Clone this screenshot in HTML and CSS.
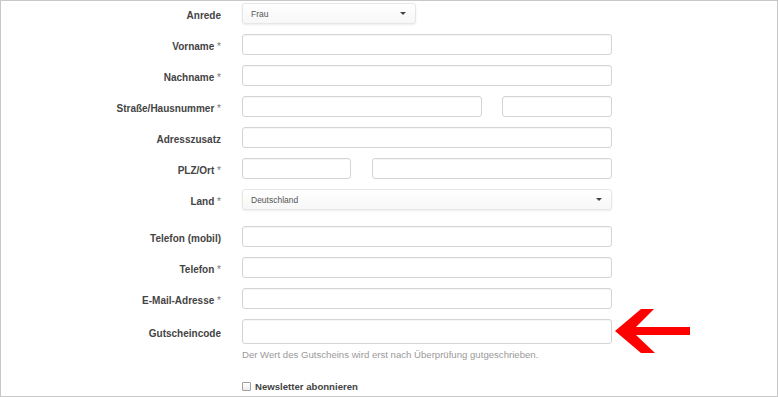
FILE: index.html
```html
<!DOCTYPE html>
<html lang="de">
<head>
<meta charset="utf-8">
<title>Formular</title>
<link rel="stylesheet" href="styles.css">
</head>
<body>
<div class="frame">
  <form class="form">
    <div class="row">
      <label class="label">Anrede</label>
      <div class="select select-short"><span>Frau</span><i class="caret"></i></div>
    </div>
    <div class="row">
      <label class="label">Vorname <span class="req">*</span></label>
      <div class="input input-full"></div>
    </div>
    <div class="row">
      <label class="label">Nachname <span class="req">*</span></label>
      <div class="input input-full"></div>
    </div>
    <div class="row">
      <label class="label">Straße/Hausnummer <span class="req">*</span></label>
      <div class="pair">
        <div class="input input-street"></div>
        <div class="input input-number"></div>
      </div>
    </div>
    <div class="row">
      <label class="label">Adresszusatz</label>
      <div class="input input-full"></div>
    </div>
    <div class="row">
      <label class="label">PLZ/Ort <span class="req">*</span></label>
      <div class="pair">
        <div class="input input-zip"></div>
        <div class="input input-city"></div>
      </div>
    </div>
    <div class="row row-spaced">
      <label class="label">Land <span class="req">*</span></label>
      <div class="select select-full"><span>Deutschland</span><i class="caret"></i></div>
    </div>
    <div class="row">
      <label class="label">Telefon (mobil)</label>
      <div class="input input-full"></div>
    </div>
    <div class="row">
      <label class="label">Telefon <span class="req">*</span></label>
      <div class="input input-full"></div>
    </div>
    <div class="row">
      <label class="label">E-Mail-Adresse <span class="req">*</span></label>
      <div class="input input-full"></div>
    </div>
    <div class="row row-tall">
      <label class="label">Gutscheincode</label>
      <div class="input input-full input-tall"></div>
      <svg class="arrow" width="80" height="50" viewBox="0 0 80 50">
        <polygon points="0,22 26,0 39,0 21,18 75,18 75,26 21,26 40,44 26,44" fill="#ff0000"/>
      </svg>
    </div>
    <p class="help">Der Wert des Gutscheins wird erst nach Überprüfung gutgeschrieben.</p>
    <div class="check-row">
      <span class="checkbox"></span>
      <span class="check-label">Newsletter abonnieren</span>
    </div>
  </form>
</div>
</body>
</html>
```

FILE: styles.css
```css
html, body {
  margin: 0;
  padding: 0;
  background: #ffffff;
}
.frame {
  box-sizing: border-box;
  width: 778px;
  height: 397px;
  border: 1px solid #c8c8c8;
  overflow: hidden;
  font-family: "Liberation Sans", Arial, sans-serif;
  color: #444444;
}
.form {
  padding-top: 2px;
}
.row {
  display: flex;
  align-items: center;
  height: 21px;
  margin-bottom: 10px;
  position: relative;
}
.row-spaced {
  margin-bottom: 16px;
}
.row-tall {
  height: 25px;
  margin-bottom: 0;
}
.label {
  box-sizing: border-box;
  width: 221px;
  padding-top: 3px;
  padding-right: 1px;
  text-align: right;
  font-size: 10px;
  font-weight: bold;
  color: #444444;
  flex: none;
}
.req {
  font-weight: normal;
  font-size: 10px;
  color: #777777;
}
.input, .select {
  box-sizing: border-box;
  height: 21px;
  border: 1px solid #d4d4d4;
  border-radius: 3px;
  background: #ffffff;
  box-shadow: inset 0 1px 1px rgba(0,0,0,0.04);
  margin-left: 20px;
  flex: none;
}
.input-full { width: 370px; }
.input-tall { height: 25px; }
.pair {
  display: flex;
  margin-left: 20px;
}
.pair .input { margin-left: 0; }
.input-street { width: 240px; margin-right: 20px; }
.input-number { width: 110px; }
.input-zip { width: 109px; margin-right: 21px; }
.input-city { width: 240px; }
.select {
  display: flex;
  align-items: center;
  justify-content: space-between;
  padding: 0 9px 0 8px;
  border-color: #e6e6e6;
  background: linear-gradient(#ffffff, #f7f7f7);
  box-shadow: 0 1px 2px rgba(0,0,0,0.08);
  font-size: 8.5px;
  color: #555555;
}
.select-short { width: 174px; }
.select-full { width: 370px; }
.caret {
  width: 0;
  height: 0;
  border-left: 3px solid transparent;
  border-right: 3px solid transparent;
  border-top: 3px solid #444444;
}
.arrow {
  position: absolute;
  left: 614px;
  top: -10px;
}
.help {
  margin: 4px 0 0 241px;
  font-size: 9.6px;
  line-height: 14px;
  color: #9a9a9a;
}
.check-row {
  display: flex;
  align-items: center;
  margin: 19px 0 0 241px;
}
.checkbox {
  box-sizing: border-box;
  width: 9px;
  height: 9px;
  border: 1px solid #a0a0a0;
  border-radius: 1px;
  background: linear-gradient(#ffffff, #ececec);
  margin-right: 4px;
}
.check-label {
  font-size: 9.6px;
  font-weight: bold;
  color: #444444;
}
```
